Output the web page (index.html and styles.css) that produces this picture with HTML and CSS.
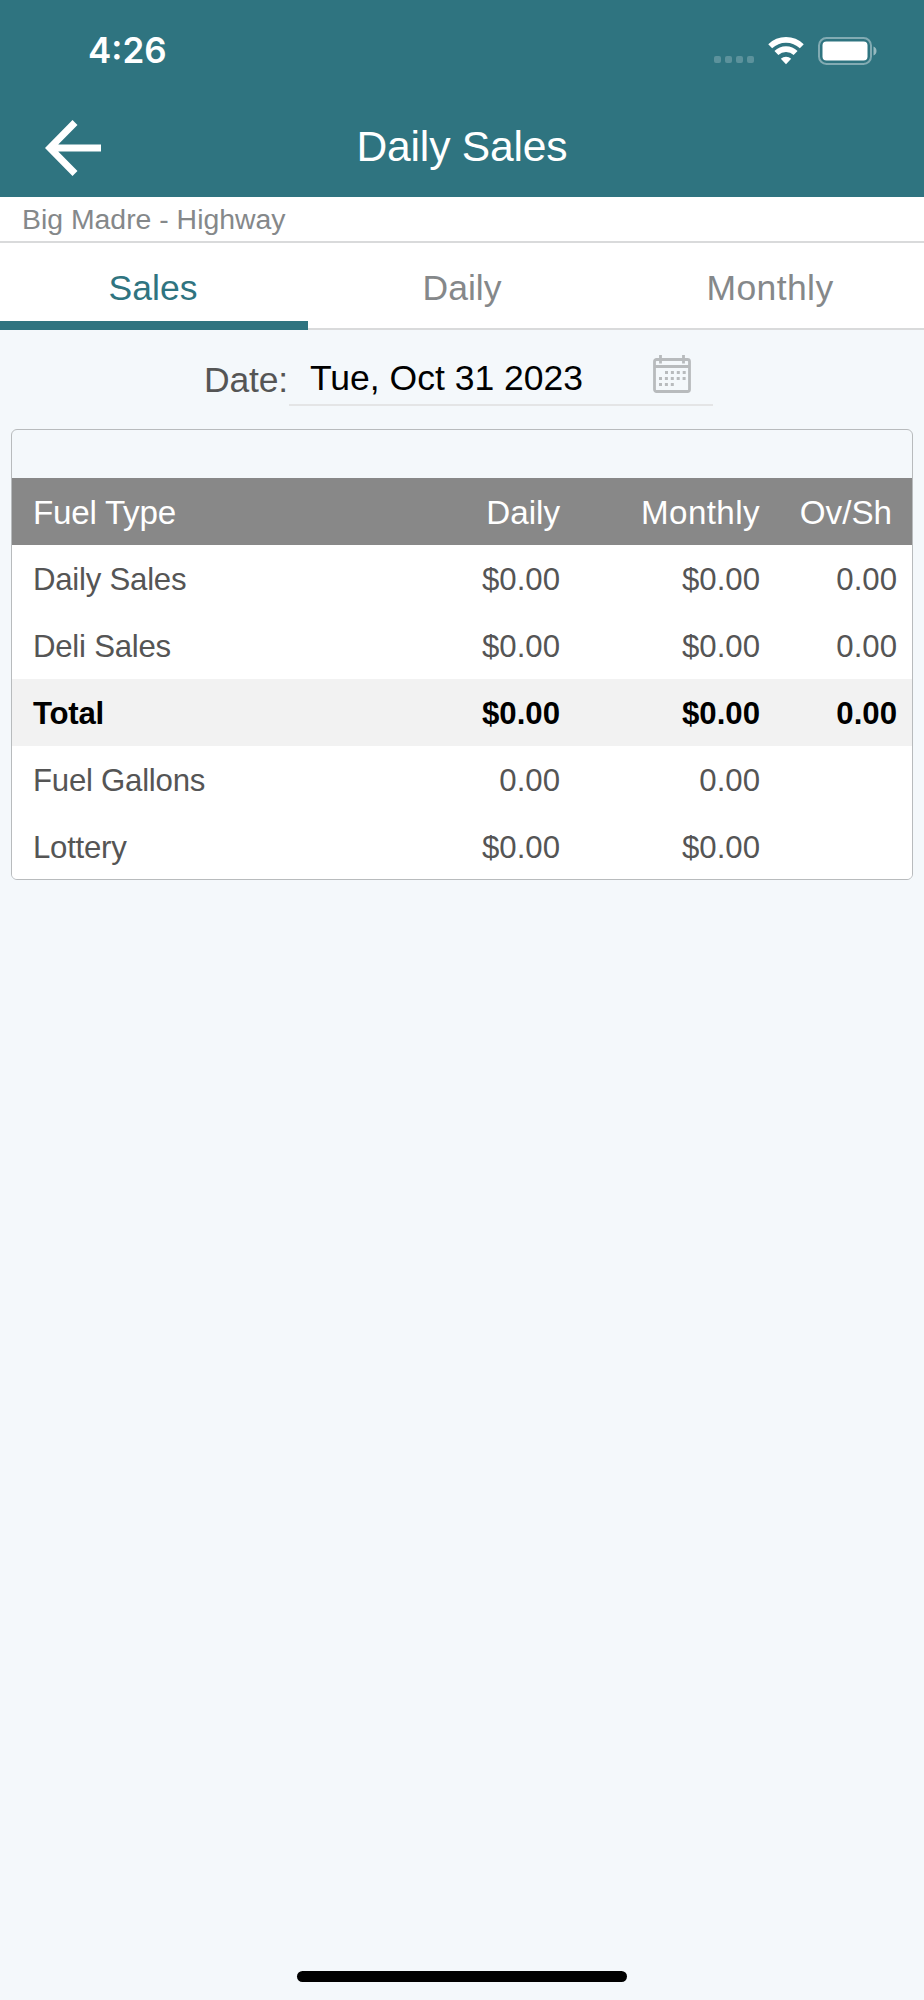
FILE: index.html
```
<!DOCTYPE html>
<html lang="en">
<head>
    <meta charset="UTF-8">
    <meta name="viewport" content="width=device-width, initial-scale=1.0">
    <title>Daily Sales</title>
    <link rel="stylesheet" href="styles.css">
</head>
<body>
    <header class="header">
        <!-- Status Bar -->
        <div class="status-bar">
            <div class="status-time">4:26</div>
            <div class="status-icons">
                <div class="signal"><span></span><span></span><span></span><span></span></div>
                <svg class="wifi" width="36" height="28" viewBox="0 0 36 28" fill="none" stroke="#fff" stroke-width="5.6">
                    <path d="M2.2 9.2a22.8 22.8 0 0 1 31.6 0"/>
                    <path d="M8.4 16a13.8 13.8 0 0 1 19.2 0"/>
                    <path d="M18 27.2l-5.2-5.4a7.6 7.6 0 0 1 10.4 0z" fill="#fff" stroke="none"/>
                </svg>
                <svg class="battery" width="60" height="28" viewBox="0 0 60 28">
                    <rect x="1" y="1" width="52" height="26" rx="7.5" fill="none" stroke="#fff" stroke-opacity=".4" stroke-width="2"/>
                    <rect x="4.5" y="4.5" width="45" height="19" rx="4" fill="#fff"/>
                    <path d="M55.5 9.5c4 1.5 4 7.5 0 9z" fill="#fff" fill-opacity=".5"/>
                </svg>
            </div>
        </div>

        <!-- Nav Bar -->
        <div class="nav-bar">
            <svg class="back" width="56" height="56" viewBox="0 0 56 56" fill="none" stroke="#fff" stroke-width="7">
                <path d="M56 28H6M30 2.5L4.8 28L30 53.5"/>
            </svg>
            <h1 class="title">Daily Sales</h1>
        </div>
    </header>

    <div class="store">Big Madre - Highway</div>

    <!-- Tabs -->
    <nav class="tabs">
        <div class="tab active">Sales</div>
        <div class="tab">Daily</div>
        <div class="tab wide">Monthly</div>
    </nav>

    <!-- Date Picker -->
    <div class="date-row">
        <span class="date-label">Date:</span>
        <div class="date-field">
            <span class="date-value">Tue, Oct 31 2023</span>
            <svg class="calendar" width="38" height="38" viewBox="0 0 38 38" fill="none" stroke="#b8bbbd" stroke-width="2.8">
                <rect x="1.5" y="4.5" width="35" height="32" rx="2"/>
                <path d="M1.5 11.5h35M7.5 0v8.500M30.500 0v8.500"/>
                <path d="M12 17.600h21M6 23.500h27M6 29.400h16" stroke-width="3" stroke-dasharray="3 2.900"/>
            </svg>
        </div>
    </div>

    <!-- Sales Table -->
    <div class="card">
        <div class="row head">
            <span>Fuel Type</span><span>Daily</span><span class="wide">Monthly</span><span>Ov/Sh</span>
        </div>
        <div class="row">
            <span>Daily Sales</span><span>$0.00</span><span>$0.00</span><span>0.00</span>
        </div>
        <div class="row">
            <span>Deli Sales</span><span>$0.00</span><span>$0.00</span><span>0.00</span>
        </div>
        <div class="row total">
            <span>Total</span><span>$0.00</span><span>$0.00</span><span>0.00</span>
        </div>
        <div class="row">
            <span>Fuel Gallons</span><span>0.00</span><span>0.00</span><span></span>
        </div>
        <div class="row">
            <span>Lottery</span><span>$0.00</span><span>$0.00</span><span></span>
        </div>
    </div>

    <!-- Home Indicator -->
    <div class="home-indicator"></div>
</body>
</html>
```
FILE: styles.css
```
* {
    margin: 0;
    padding: 0;
    box-sizing: border-box;
}

body {
    font-family: "Liberation Sans", Arial, sans-serif;
    background: #f4f8fb;
    color: #555;
    height: 2000px;
    display: flex;
    flex-direction: column;
    overflow: hidden;
}

svg {
    display: block;
    flex: none;
}

/* Header */
.header {
    height: 197px;
    background: #2f7480;
    color: white;
}

.status-bar {
    height: 98px;
    display: flex;
    justify-content: space-between;
    padding: 0 46px 0 88px;
}

.status-time {
    font-family: Inter, sans-serif;
    font-size: 35px;
    font-weight: 600;
    line-height: 101px;
}

.status-icons {
    display: flex;
    padding-top: 37px;
}

.signal {
    display: flex;
    gap: 4px;
    margin: 19px 14px 0 0;
}

.signal span {
    width: 7px;
    height: 7px;
    border-radius: 2px;
    background: rgba(255, 255, 255, 0.22);
}

.wifi {
    margin-right: 14px;
}

.nav-bar {
    height: 99px;
    display: grid;
    grid-template-columns: 120px 1fr 120px;
    align-items: center;
}

.back {
    margin-left: 45px;
}

.title {
    font-size: 42.6px;
    font-weight: 400;
    letter-spacing: -0.2px;
    text-align: center;
    padding-bottom: 3px;
}

/* Store name */
.store {
    height: 46px;
    padding-left: 22px;
    background: white;
    border-bottom: 2px solid #d9dadb;
    color: #85888a;
    font-size: 28.4px;
    line-height: 45px;
}

/* Tabs */
.tabs {
    height: 87px;
    display: grid;
    grid-template-columns: repeat(3, 1fr);
    background: white;
}

.tab {
    height: 87px;
    border-bottom: 2px solid #d9dadb;
    color: #85888a;
    font-size: 35.5px;
    line-height: 91px;
    text-align: center;
}

.tab.active {
    padding-right: 2px;
    border-bottom: 9px solid #2f7480;
    color: #2f7480;
}

.wide {
    letter-spacing: 0.4px;
}

/* Date picker */
.date-row {
    height: 99px;
    display: flex;
    align-items: flex-start;
    padding-left: 204px;
    font-size: 35.5px;
}

.date-label {
    width: 85px;
    line-height: 100px;
    letter-spacing: -0.2px;
}

.date-field {
    width: 424px;
    height: 76px;
    display: flex;
    justify-content: space-between;
    padding: 0 22px 0 21px;
    border-bottom: 2px solid #e4e5e6;
}

.date-value {
    color: black;
    line-height: 96px;
}

.calendar {
    margin-top: 25px;
}

/* Table */
.card {
    width: 902px;
    height: 451px;
    margin: 0 11px;
    padding-top: 48px;
    border: 1px solid #b8bbbd;
    border-radius: 6px;
    overflow: hidden;
}

.row {
    height: 67px;
    display: grid;
    grid-template-columns: 348px 200px 200px 137px;
    background: white;
    font-size: 31.2px;
    line-height: 69px;
    text-align: right;
}

.row span:first-child {
    padding-left: 21px;
    letter-spacing: -0.25px;
    text-align: left;
}

.row.head {
    background: #888;
    color: white;
    font-size: 33.2px;
}

.row.head span:last-child {
    padding-right: 5px;
}

.row.total {
    background: #f2f2f2;
    color: black;
    font-weight: 700;
}

/* Home indicator */
.home-indicator {
    width: 330px;
    height: 11px;
    margin: auto auto 18px;
    border-radius: 6px;
    background: black;
}
```
